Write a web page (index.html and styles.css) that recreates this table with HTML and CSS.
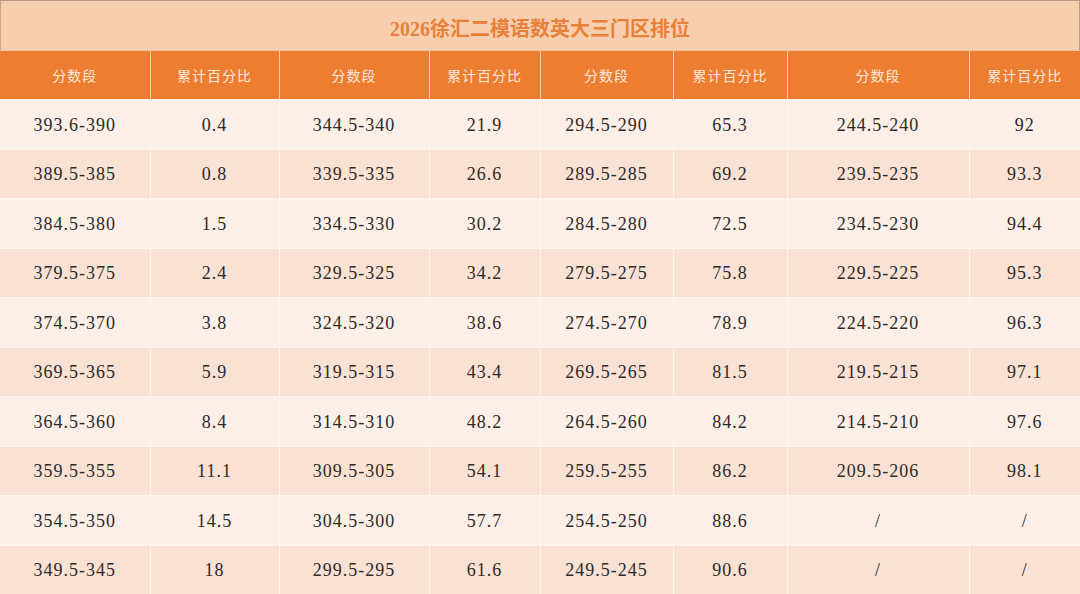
FILE: index.html
```html
<!DOCTYPE html>
<html lang="zh">
<head>
<meta charset="utf-8">
<link rel="stylesheet" href="styles.css">
</head>
<body>
<div class="sheet">
  <div class="title">2026徐汇二模语数英大三门区排位</div>
  <table class="grid">
    <colgroup>
      <col class="c1"><col class="c2"><col class="c3"><col class="c4"><col class="c5"><col class="c6"><col class="c7"><col class="c8">
    </colgroup>
    <thead>
      <tr><th>分数段</th><th>累计百分比</th><th>分数段</th><th>累计百分比</th><th>分数段</th><th>累计百分比</th><th>分数段</th><th>累计百分比</th></tr>
    </thead>
    <tbody>
      <tr><td>393.6-390</td><td>0.4</td><td>344.5-340</td><td>21.9</td><td>294.5-290</td><td>65.3</td><td>244.5-240</td><td>92</td></tr>
      <tr><td>389.5-385</td><td>0.8</td><td>339.5-335</td><td>26.6</td><td>289.5-285</td><td>69.2</td><td>239.5-235</td><td>93.3</td></tr>
      <tr><td>384.5-380</td><td>1.5</td><td>334.5-330</td><td>30.2</td><td>284.5-280</td><td>72.5</td><td>234.5-230</td><td>94.4</td></tr>
      <tr><td>379.5-375</td><td>2.4</td><td>329.5-325</td><td>34.2</td><td>279.5-275</td><td>75.8</td><td>229.5-225</td><td>95.3</td></tr>
      <tr><td>374.5-370</td><td>3.8</td><td>324.5-320</td><td>38.6</td><td>274.5-270</td><td>78.9</td><td>224.5-220</td><td>96.3</td></tr>
      <tr><td>369.5-365</td><td>5.9</td><td>319.5-315</td><td>43.4</td><td>269.5-265</td><td>81.5</td><td>219.5-215</td><td>97.1</td></tr>
      <tr><td>364.5-360</td><td>8.4</td><td>314.5-310</td><td>48.2</td><td>264.5-260</td><td>84.2</td><td>214.5-210</td><td>97.6</td></tr>
      <tr><td>359.5-355</td><td>11.1</td><td>309.5-305</td><td>54.1</td><td>259.5-255</td><td>86.2</td><td>209.5-206</td><td>98.1</td></tr>
      <tr><td>354.5-350</td><td>14.5</td><td>304.5-300</td><td>57.7</td><td>254.5-250</td><td>88.6</td><td>/</td><td>/</td></tr>
      <tr><td>349.5-345</td><td>18</td><td>299.5-295</td><td>61.6</td><td>249.5-245</td><td>90.6</td><td>/</td><td>/</td></tr>
    </tbody>
  </table>
</div>
</body>
</html>
```

FILE: styles.css
```css
html, body {
  margin: 0;
  padding: 0;
  background: #fbe6da;
}

.sheet {
  width: 1080px;
  height: 594px;
  overflow: hidden;
  display: flex;
  flex-direction: column;
}

.title {
  flex: 0 0 50px;
  height: 50px;
  box-sizing: border-box;
  border-top: 1px solid #b99a86;
  border-right: 1px solid #b99a86;
  border-left: 1px solid #c9a58c;
  background: #f8cfae;
  color: #e8803a;
  font-family: "Liberation Serif", "Noto Sans CJK SC", serif;
  font-weight: bold;
  font-size: 20px;
  display: flex;
  align-items: center;
  justify-content: center;
  padding-top: 4px;
}

.grid {
  flex: 0 0 auto;
  width: 1080px;
  border-collapse: collapse;
  table-layout: fixed;
}

.c1 { width: 150px; }
.c2 { width: 129px; }
.c3 { width: 150px; }
.c4 { width: 111px; }
.c5 { width: 133px; }
.c6 { width: 114px; }
.c7 { width: 182px; }
.c8 { width: 111px; }

.grid th {
  height: 48px;
  padding: 0;
  background: #ed7d31;
  color: #fde9dc;
  font-family: "Noto Sans CJK SC", sans-serif;
  font-weight: normal;
  font-size: 14px;
  letter-spacing: 1px;
  border-left: 1px solid #f6c9a8;
  border-top: 1px solid #f3c29e;
  text-align: center;
}

.grid th:first-child { border-left: none; }

.grid td {
  height: 46.5px;
  padding: 2px 0 0;
  text-align: center;
  color: #2e2a28;
  font-family: "Liberation Serif", "Noto Sans CJK SC", serif;
  font-size: 18px;
  letter-spacing: 1px;
  border-left: 1px solid #fdf4ee;
  border-top: 1px solid #fdf4ee;
}

.grid td:first-child { border-left: none; }

.grid tbody tr:nth-child(odd) td { background: #fcefe7; }
.grid tbody tr:nth-child(even) td { background: #f9e1d4; }
```
